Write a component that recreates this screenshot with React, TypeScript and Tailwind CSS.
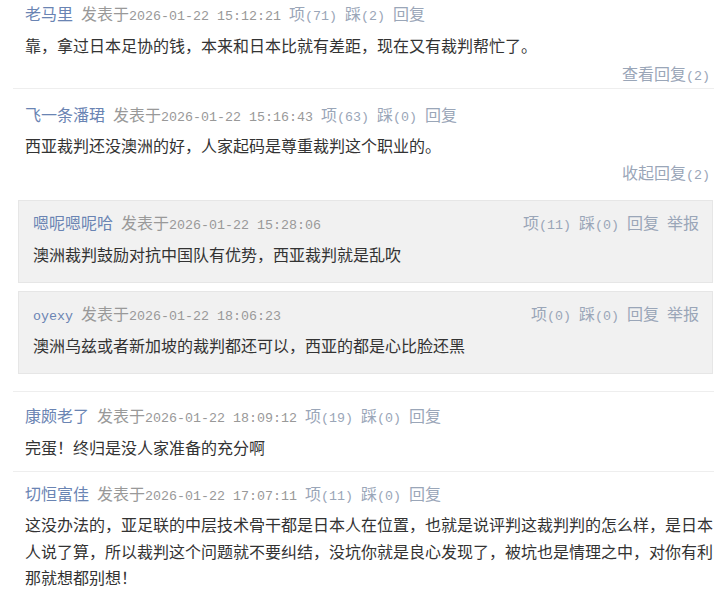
const meta = "h-[26px] font-['Noto_Sans_CJK_SC',sans-serif] text-[16px] leading-[26px] whitespace-pre"
const body = "font-['Noto_Sans_CJK_SC','Noto_Sans',sans-serif] text-[16px] leading-[27px] text-[#333]"

// CJK at 16px, ASCII runs (digits, brackets, spaces) in a half-width mono
function Mix({ text }: { text: string }) {
  const parts = text.split(/([\x20-\x7e]+)/).filter(Boolean)
  return (
    <>
      {parts.map((p, i) =>
        /^[\x20-\x7e]+$/.test(p) ? (
          <span key={i} className="font-['Liberation_Mono',monospace] text-[13.33px] leading-none">
            {p}
          </span>
        ) : (
          <span key={i} className="leading-none">{p}</span>
        ),
      )}
    </>
  )
}

type Reply = { name: string; time: string; up: number; down: number; text: string }

function MetaLine({ name, time, up, down, report }: { name: string; time: string; up: number; down: number; report?: boolean }) {
  if (report) {
    return (
      <div className={`flex justify-between ${meta}`}>
        <span>
          <span className="text-[#6a84b3]"><Mix text={name} /></span>
          <Mix text=" " />
          <span className="text-[#999]"><Mix text={`发表于${time}`} /></span>
        </span>
        <span className="text-[#9aa6b8]">
          <Mix text={`项(${up}) 踩(${down}) 回复 举报`} />
        </span>
      </div>
    )
  }
  return (
    <div className={meta}>
      <span className="text-[#6a84b3]"><Mix text={name} /></span>
      <Mix text=" " />
      <span className="text-[#999]"><Mix text={`发表于${time}`} /></span>
      <Mix text=" " />
      <span className="text-[#9aa6b8]"><Mix text={`项(${up}) 踩(${down}) 回复`} /></span>
    </div>
  )
}

function ReplyBox({ r }: { r: Reply }) {
  return (
    <div className="ml-[5px] mr-[1px] border border-[#e6e6e6] bg-[#f1f1f1] pt-[8px] pb-[14px] pl-[14px] pr-[13px]">
      <MetaLine name={r.name} time={r.time} up={r.up} down={r.down} report />
      <p className={`mt-[6px] ${body}`}>{r.text}</p>
    </div>
  )
}

const replies: Reply[] = [
  { name: '嗯呢嗯呢哈', time: '2026-01-22 15:28:06', up: 11, down: 0, text: '澳洲裁判鼓励对抗中国队有优势，西亚裁判就是乱吹' },
  { name: 'oyexy', time: '2026-01-22 18:06:23', up: 0, down: 0, text: '澳洲乌兹或者新加坡的裁判都还可以，西亚的都是心比脸还黑' },
]

export default function App() {
  return (
    <div className="h-[596px] w-[720px] overflow-hidden bg-white">
      <div className="ml-[13px] w-[701px]">
        <div className="pl-[12px] pb-[2px]">
          <MetaLine name="老马里" time="2026-01-22 15:12:21" up={71} down={2} />
          <p className={`mt-[6px] ${body}`}>靠，拿过日本足协的钱，本来和日本比就有差距，现在又有裁判帮忙了。</p>
          <div className={`mt-[1px] mr-[4px] text-right text-[#9aa6b8] ${meta}`}>
            <Mix text="查看回复(2)" />
          </div>
        </div>

        <div className="border-t border-[#eeeeee] pt-[12px] pb-[17px]">
          <div className="pl-[12px]">
            <MetaLine name="飞一条潘珺" time="2026-01-22 15:16:43" up={63} down={0} />
            <p className={`mt-[5px] ${body}`}>西亚裁判还没澳洲的好，人家起码是尊重裁判这个职业的。</p>
            <div className={`mr-[4px] text-right text-[#9aa6b8] ${meta}`}>
              <Mix text="收起回复(2)" />
            </div>
          </div>
          <div className="mt-[15px] flex flex-col gap-[8px]">
            {replies.map((r) => (
              <ReplyBox key={r.name} r={r} />
            ))}
          </div>
        </div>

        <div className="border-t border-[#eeeeee] pl-[12px] pt-[10px] pb-[10px]">
          <MetaLine name="康颇老了" time="2026-01-22 18:09:12" up={19} down={0} />
          <p className={`mt-[6px] ${body}`}>完蛋！终归是没人家准备的充分啊</p>
        </div>

        <div className="border-t border-[#eeeeee] pl-[12px] pt-[8px]">
          <MetaLine name="切恒富佳" time="2026-01-22 17:07:11" up={11} down={0} />
          <p className={`mt-[5px] !leading-[26.5px] ${body}`}>
            这没办法的，亚足联的中层技术骨干都是日本人在位置，也就是说评判这裁判判的怎么样，是日本人说了算，所以裁判这个问题就不要纠结，没坑你就是良心发现了，被坑也是情理之中，对你有利那就想都别想！
          </p>
        </div>
      </div>
    </div>
  )
}
